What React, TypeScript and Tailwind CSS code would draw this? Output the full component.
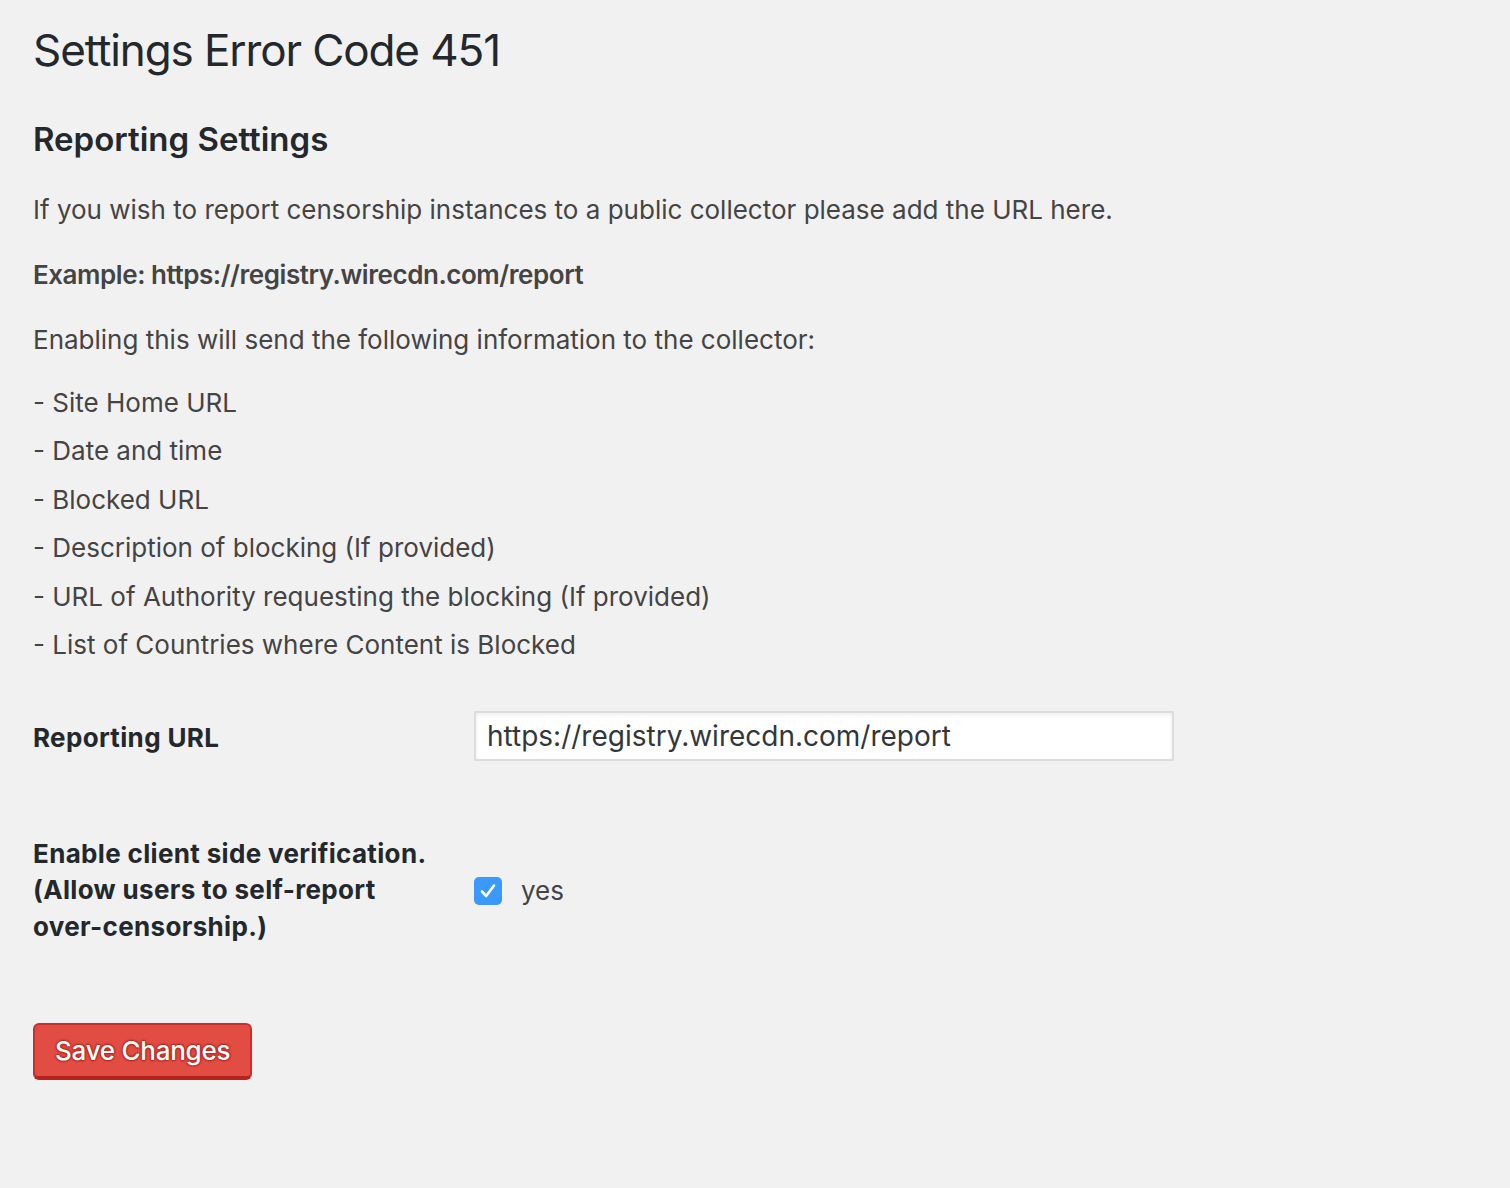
import React from "react";

const items = [
  "- Site Home URL",
  "- Date and time",
  "- Blocked URL",
  "- Description of blocking (If provided)",
  "- URL of Authority requesting the blocking (If provided)",
  "- List of Countries where Content is Blocked",
];

export default function App() {
  return (
    <div
      className="min-h-screen bg-[#f1f1f1] pl-[33px] pt-[20px] text-[#444]"
      style={{ fontFamily: "Inter, 'Noto Sans', sans-serif" }}
    >
      <h1 className="text-[44px] leading-[60px] font-normal text-[#23282d] tracking-[-0.025em]">
        Settings Error Code 451
      </h1>
      <h2 className="mt-[37px] text-[33px] leading-[44px] font-semibold text-[#23282d]">
        Reporting Settings
      </h2>

      <p className="mt-[29px] text-[26px] leading-[39px]">
        If you wish to report censorship instances to a public collector please add the URL here.
      </p>
      <p className="mt-[26px] text-[26px] leading-[39px] font-semibold tracking-[-0.017em]">
        Example: https://registry.wirecdn.com/report
      </p>
      <p className="mt-[26px] text-[26px] leading-[39px]">
        Enabling this will send the following information to the collector:
      </p>
      <div className="mt-[20px] text-[26px] leading-[48.4px]">
        {items.map((it) => (
          <div key={it}>{it}</div>
        ))}
      </div>

      <div className="mt-[11px] flex">
        <div className="w-[420px] pr-[20px] pt-[40px] pb-[40px] text-[26px] leading-[36.5px] font-bold text-[#23282d] tracking-[0.013em]">
          Reporting URL
        </div>
        <div className="pl-[21px] pt-[31px] pb-[29px]">
          <input
            type="text"
            defaultValue="https://registry.wirecdn.com/report"
            className="h-[50px] w-[700px] border-2 border-[#ddd] bg-white px-[11px] text-[28px] text-[#32373c] shadow-[inset_0_2px_4px_rgba(0,0,0,0.07)] outline-none"
          />
        </div>
      </div>

      <div className="flex items-center">
        <div className="w-[420px] pr-[20px] pt-[39px] pb-[40px] text-[26px] leading-[36.5px] font-bold text-[#23282d] tracking-[0.013em]">
          Enable client side verification. (Allow users to self-report over-censorship.)
        </div>
        <div className="flex items-center pl-[21px]">
          <span className="flex h-[28px] w-[28px] items-center justify-center rounded-[5px] bg-[#3b99fc]">
            <svg width="22" height="22" viewBox="0 0 22 22" fill="none">
              <path d="M5 11.5 L9.2 16 L17 5.5" stroke="white" strokeWidth="2.6" strokeLinecap="round" strokeLinejoin="round" />
            </svg>
          </span>
          <span className="ml-[19px] text-[26px] leading-[36px] text-[#444]">yes</span>
        </div>
      </div>

      <button className="mt-[38px] h-[57px] rounded-[6px] border-2 border-b-[4px] border-[#c9302c] border-b-[#b8221a] bg-[#e14d43] px-[20px] text-[26px] font-medium text-white [text-shadow:0_-1px_2px_#b52a20,1px_0_2px_#b52a20,0_1px_2px_#b52a20,-1px_0_2px_#b52a20] tracking-[-0.01em]">
        Save Changes
      </button>
    </div>
  );
}
